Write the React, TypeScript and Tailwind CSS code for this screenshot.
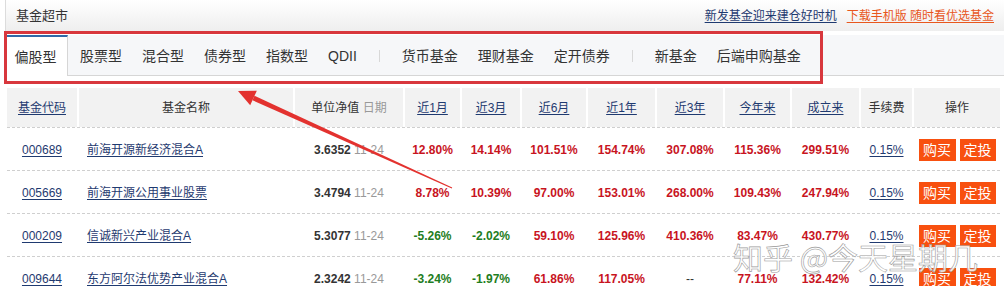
import React from 'react';

type Row = {
  code: string;
  name: string;
  nav: string;
  vals: string[];
};

const rows: Row[] = [
  { code: '000689', name: '前海开源新经济混合A', nav: '3.6352', vals: ['12.80%', '14.14%', '101.51%', '154.74%', '307.08%', '115.36%', '299.51%'] },
  { code: '005669', name: '前海开源公用事业股票', nav: '3.4794', vals: ['8.78%', '10.39%', '97.00%', '153.01%', '268.00%', '109.43%', '247.94%'] },
  { code: '000209', name: '信诚新兴产业混合A', nav: '5.3077', vals: ['-5.26%', '-2.02%', '59.10%', '125.96%', '410.36%', '83.47%', '430.77%'] },
  { code: '009644', name: '东方阿尔法优势产业混合A', nav: '2.3242', vals: ['-3.24%', '-1.97%', '61.86%', '117.05%', '--', '77.11%', '132.42%'] },
];

const cols = 'grid grid-cols-[70px_214px_108px_55px_58px_64px_67px_66px_65px_67px_51px_86px] gap-x-[2px]';

const tabs: (string | null)[] = ['股票型', '混合型', '债券型', '指数型', 'QDII', null, '货币基金', '理财基金', '定开债券', null, '新基金', '后端申购基金'];

const Hd = ({ children, link }: { children: React.ReactNode; link?: boolean }) => (
  <div className="bg-[#f2f2f2] flex items-center justify-center">
    <span className={link ? 'text-[#1f3a70] underline underline-offset-2' : 'text-[#333]'}>{children}</span>
  </div>
);

const pctColor = (v: string) => (v === '--' ? 'text-[#333] font-normal' : v.startsWith('-') ? 'text-[#1e7d22]' : 'text-[#c8141e]');

export default function App() {
  return (
    <div className="relative w-[1004px] h-[286px] overflow-hidden bg-white text-[12px] text-[#333] font-['Liberation_Sans','Noto_Sans_CJK_SC',sans-serif]">
      {/* title bar */}
      <div className="ml-[5px] h-[31px] border-l border-[#dcdcdc] bg-gradient-to-b from-white to-[#eeeeee] flex items-center justify-between pl-[10px] pr-[10px]">
        <span className="text-[13px] text-[#333]">基金超市</span>
        <div className="flex items-center gap-[10px]">
          <span className="text-[#1f3a70] underline underline-offset-2">新发基金迎来建仓好时机</span>
          <span className="text-[#e8571d] underline underline-offset-2">下载手机版 随时看优选基金</span>
        </div>
      </div>

      {/* tabs */}
      <div className="mt-[4px] ml-[7px] h-[41px] bg-[#f6f7f9] border-b border-[#d6d6d6] flex items-stretch text-[14px]">
        <div className="w-[61px] -mb-px bg-white border-t-2 border-t-[#2f6aa8] border-r border-r-[#d6d6d6] flex items-center justify-center pr-[3px] pt-[2px]">
          偏股型
        </div>
        <div className="ml-[12px] flex items-center gap-[20px] pt-[2px]">
          {tabs.map((t, i) =>
            t ? (
              <span key={i} className="text-[#333]">{t}</span>
            ) : (
              <span key={i} className="w-px h-[12px] bg-[#d8d8d8] mx-[2px]" />
            )
          )}
        </div>
      </div>

      {/* table */}
      <div className="mt-[12px] ml-[7px] w-[993px]">
        <div className={`${cols} h-[39px]`}>
          <Hd link>基金代码</Hd>
          <Hd>基金名称</Hd>
          <div className="bg-[#f2f2f2] flex items-center justify-center">
            <span>单位净值 <span className="text-[#999]">日期</span></span>
          </div>
          <Hd link>近1月</Hd>
          <Hd link>近3月</Hd>
          <Hd link>近6月</Hd>
          <Hd link>近1年</Hd>
          <Hd link>近3年</Hd>
          <Hd link>今年来</Hd>
          <Hd link>成立来</Hd>
          <Hd>手续费</Hd>
          <Hd>操作</Hd>
        </div>
        {rows.map((r) => (
          <div key={r.code} className={`${cols} h-[43px] border-t border-dashed border-[#cfcfcf] first:border-t-0 items-center pt-[2px]`}>
            <div className="text-center">
              <span className="text-[#1f3a70] underline underline-offset-2">{r.code}</span>
            </div>
            <div className="pl-[8px]">
              <span className="text-[#1f3a70] underline underline-offset-2">{r.name}</span>
            </div>
            <div className="text-center">
              <span className="font-bold text-[#333]">{r.nav}</span> <span className="text-[#999]">11-24</span>
            </div>
            {r.vals.map((v, i) => (
              <div key={i} className={`text-center font-bold ${pctColor(v)}`}>{v}</div>
            ))}
            <div className="text-center">
              <span className="text-[#1f3a70] underline underline-offset-2">0.15%</span>
            </div>
            <div className="flex justify-center gap-[4px] text-[14px] text-white">
              <span className="w-[37px] h-[22px] bg-[#f8500f] flex items-center justify-center">购买</span>
              <span className="w-[36px] h-[22px] bg-[#f8500f] flex items-center justify-center">定投</span>
            </div>
          </div>
        ))}
      </div>

      {/* annotation box */}
      <div className="absolute left-[4px] top-[31px] w-[819px] h-[53px] border-[3px] border-[#d8373d] pointer-events-none" />

      {/* annotation arrow */}
      <svg className="absolute left-0 top-0 pointer-events-none" width="1004" height="286">
        <polygon points="238,91 256.8,90.7 250.2,105.3" fill="#e3322f" />
        <polygon points="252.5,100.3 254.5,95.7 452.2,187.5 451.8,188.5" fill="#e3322f" />
      </svg>

      {/* watermark */}
      <div className="absolute left-[733px] top-[236px] text-[30px] leading-[40px] text-white/85 [-webkit-text-stroke:0.6px_#9a9a9a] font-['Noto_Sans_CJK_SC',sans-serif] whitespace-nowrap">
        知乎 @今天星期几
      </div>
    </div>
  );
}
